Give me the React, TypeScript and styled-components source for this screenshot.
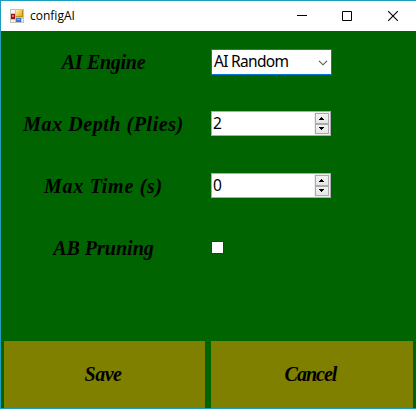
import React from "react";
import styled, { createGlobalStyle } from "styled-components";

const GlobalStyle = createGlobalStyle`
  * { box-sizing: border-box; }
  body { margin: 0; overflow: hidden; }
`;

const Window = styled.div`
  width: 416px;
  height: 409px;
  display: flex;
  flex-direction: column;
  border: solid #1c9ebc;
  border-width: 1px 0 1px 1px;
  background: #006400;
`;

const TitleBar = styled.header`
  height: 30px;
  flex: none;
  display: flex;
  align-items: center;
  padding-left: 9px;
  background: #fff;
`;

const Title = styled.h1`
  margin: 0 auto 0 6px;
  font: 400 12px/16px "Open Sans", sans-serif;
  color: #000;
`;

const CaptionButton = styled.button<{ $width?: number }>`
  width: ${(p) => p.$width ?? 46}px;
  height: 30px;
  padding: 0;
  border: 0;
  background: transparent;
  display: flex;
  align-items: center;
  justify-content: center;
`;

const Form = styled.main`
  flex: 1;
  display: grid;
  grid-template-rows: repeat(4, 62px) 62px;
`;

const Row = styled.div`
  display: grid;
  grid-template-columns: 207px 1fr;
  align-items: center;
`;

const Script = styled.span<{ $spacing?: number }>`
  font: italic 700 20px/24px "Liberation Serif", serif;
  letter-spacing: ${(p) => p.$spacing ?? 0}px;
  color: #000;
  white-space: nowrap;
`;

const Label = styled.label`
  display: flex;
  justify-content: center;
  padding-right: 2px;
`;

const Field = styled.div<{ $combo?: boolean }>`
  width: ${(p) => (p.$combo ? 121 : 120)}px;
  height: ${(p) => (p.$combo ? 26 : 25)}px;
  margin: 0 0 1px 3px;
  padding-left: ${(p) => (p.$combo ? 2 : 1)}px;
  border: 1px solid ${(p) => (p.$combo ? "#0078d7" : "#abadb3")};
  background: #fff;
  display: flex;
  align-items: center;
  justify-content: space-between;
`;

const Value = styled.span<{ $spacing?: number }>`
  padding-bottom: 1px;
  font: 400 15.5px/20px "Noto Sans", sans-serif;
  letter-spacing: ${(p) => p.$spacing ?? 0}px;
  color: #000;
`;

const Arrow = styled.svg`
  margin: 2px 3px 0 0;
`;

const Spinner = styled.div`
  display: flex;
  flex-direction: column;
  width: 16px;
  height: 23px;
  padding: 1px;
  background: #f0f0f0;
`;

const SpinButton = styled.button`
  flex: 1;
  padding: 0;
  border: 1px solid #acacac;
  background: linear-gradient(#f2f2f2, #e7e7e7);
  display: flex;
  align-items: center;
  justify-content: center;
`;

const SpinArrow = styled.svg`
  margin-right: 1px;
`;

const CheckBox = styled.div`
  width: 13px;
  height: 13px;
  margin: 0 0 1px 3px;
  border: 1px solid #333;
  background: #fff;
`;

const Actions = styled.footer`
  height: 67px;
  flex: none;
  display: grid;
  grid-template-columns: 201px 202px;
  gap: 6px;
  padding-left: 3px;
`;

const ActionButton = styled.button`
  padding: 0 3px 2px 0;
  border: 0;
  background: #808000;
`;

function AppIcon() {
  return (
    <svg width="14" height="14" viewBox="0 0 14 14" shapeRendering="crispEdges">
      <defs>
        <linearGradient id="gold" x2="1" y2="1">
          <stop stopColor="#fff0a8" />
          <stop offset="1" stopColor="#e6a51a" />
        </linearGradient>
      </defs>
      <path fill="#c3c3c3" d="M0 0h14v14H0z" />
      <path fill="#f4f4f4" d="M1 1h4v3H1zM1 11h4v2H1zM12 10h1v3h-1z" />
      <path fill="#c88a10" d="M6 1h7v7H6z" />
      <path fill="url(#gold)" d="M6 1h6v6H6z" />
      <path fill="#a4120c" d="M1 5h4v5H1z" />
      <path fill="#e4735c" d="M2 6h2v2H2z" />
      <path fill="#3b76ce" d="M6 9h5v4H6z" />
      <path fill="#8bb9f2" d="M7 10h3v1H7z" />
    </svg>
  );
}

function NumberField({ value }: { value: number }) {
  return (
    <Field>
      <Value>{value}</Value>
      <Spinner>
        {["M2 0h1v1h1v1h1v1H0V2h1V1h1z", "M0 0h5v1H4v1H3v1H2V2H1V1H0z"].map((d) => (
          <SpinButton key={d}>
            <SpinArrow width="5" height="3" shapeRendering="crispEdges"><path d={d} /></SpinArrow>
          </SpinButton>
        ))}
      </Spinner>
    </Field>
  );
}

export default function App() {
  return (
    <>
      <GlobalStyle />
      <Window>
        <TitleBar>
          <AppIcon />
          <Title>configAI</Title>
          <CaptionButton $width={44} aria-label="Minimize">
            <svg width="10" height="10" shapeRendering="crispEdges"><path d="M0 4h10v1H0z" /></svg>
          </CaptionButton>
          <CaptionButton aria-label="Maximize">
            <svg width="10" height="10"><path d="M.5.5h9v9h-9z" fill="none" stroke="#000" /></svg>
          </CaptionButton>
          <CaptionButton aria-label="Close">
            <svg width="10" height="10"><path d="M0 0l10 10M10 0L0 10" stroke="#000" strokeWidth="1.1" /></svg>
          </CaptionButton>
        </TitleBar>
        <Form>
          <Row>
            <Label><Script $spacing={-0.3}>AI Engine</Script></Label>
            <Field $combo>
              <Value $spacing={-0.7}>AI Random</Value>
              <Arrow width="10" height="6"><path d="M1 .8l4 4 4-4" fill="none" stroke="#555" strokeWidth="1.1" /></Arrow>
            </Field>
          </Row>
          <Row>
            <Label><Script $spacing={0.55}>Max Depth (Plies)</Script></Label>
            <NumberField value={2} />
          </Row>
          <Row>
            <Label><Script $spacing={0.7}>Max Time (s)</Script></Label>
            <NumberField value={0} />
          </Row>
          <Row>
            <Label><Script>AB Pruning</Script></Label>
            <CheckBox role="checkbox" aria-checked={false} />
          </Row>
        </Form>
        <Actions>
          <ActionButton><Script $spacing={-0.5}>Save</Script></ActionButton>
          <ActionButton><Script $spacing={-1}>Cancel</Script></ActionButton>
        </Actions>
      </Window>
    </>
  );
}
